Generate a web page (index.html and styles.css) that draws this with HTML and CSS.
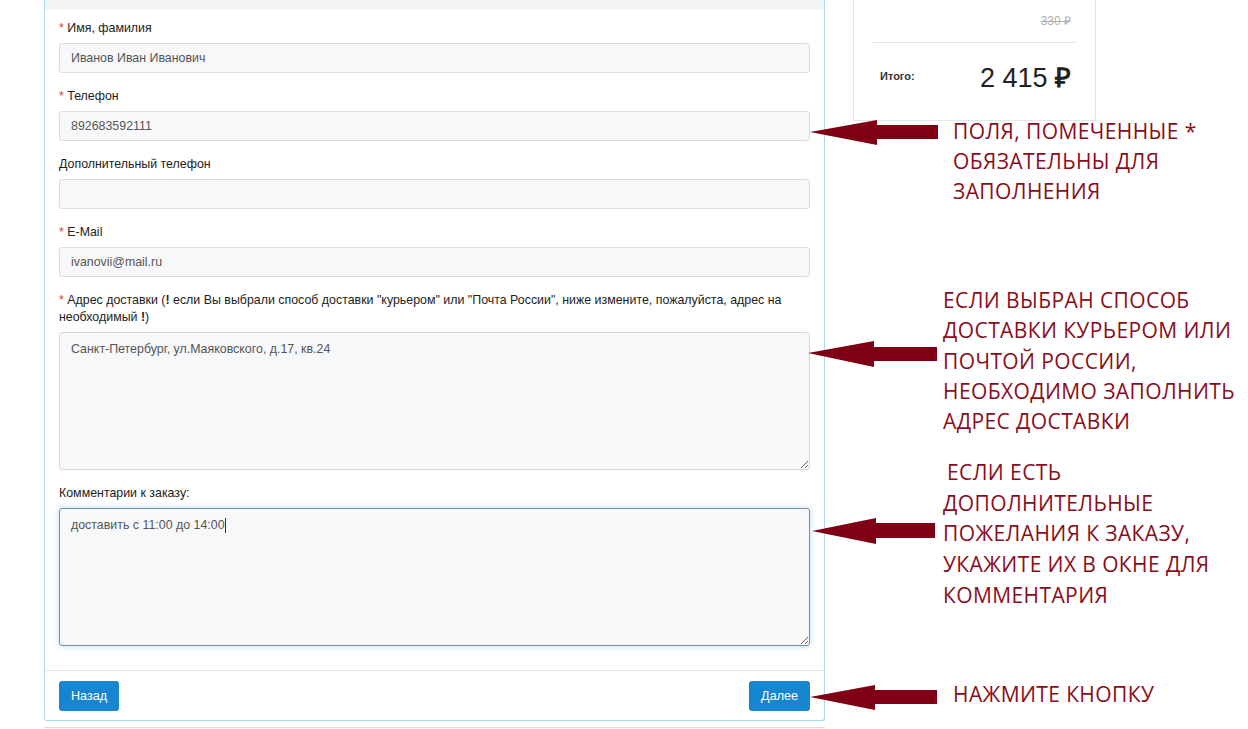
FILE: index.html
```html
<!DOCTYPE html>
<html lang="ru">
<head>
<meta charset="utf-8">
<title>Оформление заказа</title>
<link rel="stylesheet" href="styles.css">
</head>
<body>
<div class="page">
  <div class="main">
    <div class="card">
      <div class="card-head"></div>
      <div class="card-body">
        <div class="group">
          <label class="lbl"><span class="req">*</span> Имя, фамилия</label>
          <input class="ctl" type="text" value="Иванов Иван Иванович" readonly>
        </div>
        <div class="group">
          <label class="lbl"><span class="req">*</span> Телефон</label>
          <input class="ctl" type="text" value="892683592111" readonly>
        </div>
        <div class="group">
          <label class="lbl">Дополнительный телефон</label>
          <input class="ctl" type="text" value="" readonly>
        </div>
        <div class="group">
          <label class="lbl"><span class="req">*</span> E-Mail</label>
          <input class="ctl" type="text" value="ivanovii@mail.ru" readonly>
        </div>
        <div class="group">
          <label class="lbl"><span class="req">*</span> Адрес доставки (<b>!</b> если Вы выбрали способ доставки "курьером" или "Почта России", ниже измените, пожалуйста, адрес на необходимый <b>!</b>)</label>
          <div class="ta">Санкт-Петербург, ул.Маяковского, д.17, кв.24</div>
        </div>
        <div class="group last">
          <label class="lbl">Комментарии к заказу:</label>
          <div class="ta focus">доставить с 11:00 до 14:00<span class="caret"></span></div>
        </div>
      </div>
      <div class="card-foot">
        <button class="btn">Назад</button>
        <button class="btn">Далее</button>
      </div>
    </div>
    <div class="next-card"></div>
  </div>
  <aside class="side">
    <div class="sum">
      <div class="old-row"><span class="old">330 ₽</span></div>
      <div class="total-row">
        <span class="total-lbl">Итого:</span>
        <span class="total">2 415 <b class="rub">₽</b></span>
      </div>
    </div>
  </aside>
</div>

<svg class="arrow a1" width="130" height="26" viewBox="0 0 130 26"><polygon points="0,12 67,0 67,5 128,5 128,19 67,19 67,25"/></svg>
<svg class="arrow a2" width="130" height="27" viewBox="0 0 130 27"><polygon points="0,12 66,0 66,6 129,6 129,20 66,20 66,26"/></svg>
<svg class="arrow a3" width="130" height="27" viewBox="0 0 130 27"><polygon points="0,13 64,0 64,5 123,5 123,20 64,20 64,26"/></svg>
<svg class="arrow a4" width="130" height="27" viewBox="0 0 130 27"><polygon points="0,12 65,0 65,5 127,5 127,19 65,19 65,25"/></svg>

<div class="note n1">ПОЛЯ, ПОМЕЧЕННЫЕ *<br>ОБЯЗАТЕЛЬНЫ ДЛЯ<br>ЗАПОЛНЕНИЯ</div>
<div class="note n2">ЕСЛИ ВЫБРАН СПОСОБ<br>ДОСТАВКИ КУРЬЕРОМ ИЛИ<br>ПОЧТОЙ РОССИИ,<br>НЕОБХОДИМО ЗАПОЛНИТЬ<br>АДРЕС ДОСТАВКИ</div>
<div class="note n3"><span class="ind">ЕСЛИ ЕСТЬ</span><br>ДОПОЛНИТЕЛЬНЫЕ<br>ПОЖЕЛАНИЯ К ЗАКАЗУ,<br>УКАЖИТЕ ИХ В ОКНЕ ДЛЯ<br>КОММЕНТАРИЯ</div>
<div class="note n4">НАЖМИТЕ КНОПКУ</div>
</body>
</html>
```

FILE: styles.css
```css
html, body {
  margin: 0;
  padding: 0;
  background: #fff;
}
body {
  font-family: "Liberation Sans", Arial, sans-serif;
  font-size: 12.4px;
  color: #333;
  position: relative;
  overflow: hidden;
  height: 729px;
}
.page {
  display: flex;
  align-items: flex-start;
  gap: 28px;
  padding-left: 44px;
}
.main {
  width: 781px;
}
.card {
  border: 1px solid #a8dbe7;
  border-top: none;
  border-radius: 0 0 3px 3px;
}
.card-head {
  height: 10px;
  background: #f4f5f7;
}
.card-body {
  padding: 10px 14px 24px 14px;
}
.group {
  margin-bottom: 15px;
}
.group.last {
  margin-bottom: 0;
}
.lbl {
  display: block;
  line-height: 17px;
  margin-bottom: 6px;
  color: #222;
}
.req {
  color: #e0403a;
}
.ctl {
  display: block;
  box-sizing: border-box;
  width: 100%;
  height: 30px;
  margin: 0;
  padding: 0 11px;
  font: 12.4px "Liberation Sans", Arial, sans-serif;
  color: #555;
  background: #f7f8fa;
  border: 1px solid #dcdcdc;
  border-radius: 3px;
  outline: none;
}
.ta {
  box-sizing: border-box;
  height: 138px;
  padding: 9px 11px;
  line-height: 15px;
  color: #555;
  background: #f7f8fa;
  border: 1px solid #d8d8d8;
  border-radius: 3px;
  overflow: auto;
  resize: vertical;
}
.ta.focus {
  border-color: #7d8f9c;
  box-shadow: 0 0 6px rgba(102, 175, 233, 0.45);
}
.caret {
  display: inline-block;
  width: 1px;
  height: 15px;
  background: #333;
  vertical-align: top;
}
.card-foot {
  display: flex;
  justify-content: space-between;
  border-top: 1px solid #e6e6e6;
  padding: 10px 14px 9px 14px;
}
.btn {
  height: 30px;
  padding: 0 12px;
  border: none;
  border-radius: 3px;
  background: #1686d0;
  color: #fff;
  font: 12.6px "Liberation Sans", Arial, sans-serif;
}
.next-card {
  margin-top: 6px;
  height: 10px;
  border-top: 1px solid #dedede;
  background: #fafafa;
}
.side {
  width: 243px;
}
.sum {
  border: 1px solid #e6e6e6;
  border-top: none;
  height: 121px;
  box-sizing: border-box;
  padding: 0 19px;
}
.old-row {
  display: flex;
  justify-content: flex-end;
  height: 43px;
  padding-top: 14px;
  box-sizing: border-box;
  border-bottom: 1px solid #e4e4e4;
  padding-right: 5px;
}
.old {
  font-size: 12px;
  color: #b0b0b0;
  text-decoration: line-through;
  line-height: 14px;
}
.total-row {
  display: flex;
  justify-content: space-between;
  align-items: center;
  height: 66px;
  padding: 0 5px 0 7px;
}
.total-lbl {
  font-weight: bold;
  font-size: 11px;
}
.total {
  font-size: 27px;
  color: #222;
}
.rub {
  font-weight: bold;
}
.arrow {
  position: absolute;
  fill: #7f0014;
}
.a1 { left: 810px; top: 120px; }
.a2 { left: 808px; top: 341px; }
.a3 { left: 812px; top: 518px; }
.a4 { left: 810px; top: 685px; }
.note {
  position: absolute;
  font-family: "Open Sans", "Noto Sans", sans-serif;
  font-size: 21px;
  letter-spacing: 0.4px;
  color: #8a0d1b;
  white-space: nowrap;
}
.n1 { left: 953px; top: 116px; line-height: 30px; }
.n2 { left: 943px; top: 285px; line-height: 30.3px; }
.n3 { left: 943px; top: 457px; line-height: 30.7px; }
.n3 .ind { padding-left: 4px; }
.n4 { left: 953px; top: 679px; line-height: 30px; }
```
